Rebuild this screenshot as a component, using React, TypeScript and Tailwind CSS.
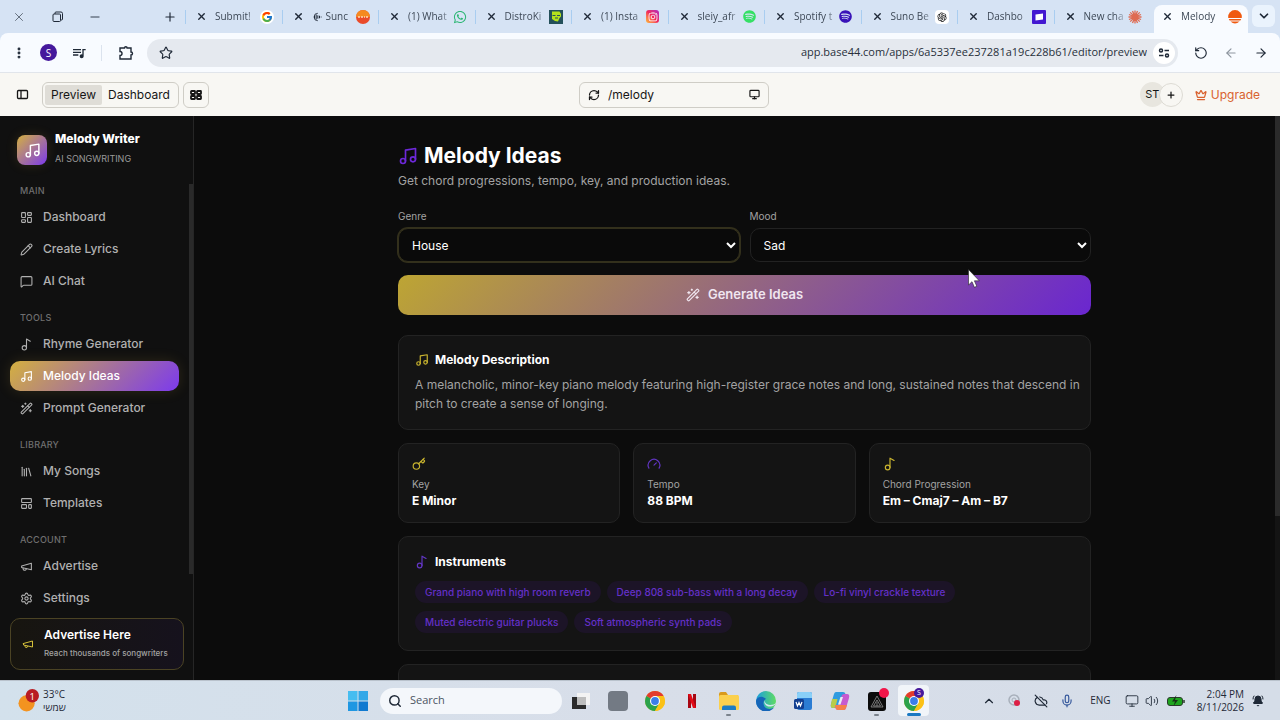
// <== IMPORTS ==>
import { JSX, ReactNode } from "react";
import {
  ArrowLeft,
  ArrowRight,
  BellRing,
  ChevronDown,
  ChevronUp,
  CloudOff,
  Crown,
  EllipsisVertical,
  Gauge,
  Key,
  LayoutDashboard,
  LayoutTemplate,
  Library,
  MessageSquare,
  Mic,
  Minus,
  Monitor,
  Music,
  Pencil,
  Plus,
  RefreshCw,
  RotateCcw,
  Search,
  Settings,
  Star,
  Volume2,
  WandSparkles,
  X,
} from "lucide-react";
import { FcGoogle } from "react-icons/fc";
import { FaInstagram, FaSpotify, FaWhatsapp } from "react-icons/fa6";
import { AiOutlineOpenAI } from "react-icons/ai";
import { MdQueueMusic } from "react-icons/md";

// <== TAB TYPE ==>
type Tab = { title: string; icon: ReactNode; audio?: boolean };

// <== NAV SECTION TYPE ==>
type NavSection = {
  heading: string;
  items: { label: string; icon: (props: { className?: string }) => ReactNode; active?: boolean }[];
};

// <== SINGLE NOTE ICON ==>
const NoteIcon = ({ className }: { className?: string }): JSX.Element => (
  <svg
    viewBox="0 0 24 24"
    fill="none"
    stroke="currentColor"
    strokeWidth="2"
    strokeLinecap="round"
    strokeLinejoin="round"
    className={className}
  >
    <circle cx="8" cy="18" r="4" />
    <path d="M12 18V2l7 4" />
  </svg>
);

// <== MEGAPHONE ICON ==>
const MegaphoneIcon = ({ className }: { className?: string }): JSX.Element => (
  <svg
    viewBox="0 0 24 24"
    fill="none"
    stroke="currentColor"
    strokeWidth="2"
    strokeLinecap="round"
    strokeLinejoin="round"
    className={className}
  >
    <path d="m3 11 18-5v12L3 14v-3z" />
    <path d="M11.6 16.8a3 3 0 1 1-5.8-1.6" />
  </svg>
);

// <== BROWSER TABS ==>
const tabs: Tab[] = [
  { title: "Submit!", icon: <FcGoogle className="w-3.5 h-3.5 rounded-full bg-white p-px" /> },
  {
    title: "Sunc",
    audio: true,
    icon: (
      <svg viewBox="0 0 14 14" className="w-3.5 h-3.5">
        <circle cx="7" cy="7" r="7" fill="#ea4b2a" />
        <path d="M0 7a7 7 0 0 1 14 0z" fill="#f58a1f" />
        <path d="M2 7h2M5 7h2M8 7h1M10 7h2" stroke="#ffd9b8" strokeWidth="1.5" />
      </svg>
    ),
  },
  { title: "(1) What", icon: <FaWhatsapp className="w-3.5 h-3.5 text-[#2bb673]" /> },
  {
    title: "DistroKi",
    icon: (
      <svg viewBox="0 0 14 14" className="w-3.5 h-3.5">
        <rect width="14" height="14" fill="#24505a" />
        <path d="M3 1.500h7.500q2 2 1.500 5l-1.500 1.500-1.500 3.500-3-.5L3 9z" fill="#b4e01c" />
        <path d="M3.500 5.500h3M8 5.500h3M6 8h3" stroke="#24505a" strokeWidth="1" />
      </svg>
    ),
  },
  {
    title: "(1) Insta",
    icon: (
      <span className="w-[13px] h-[13px] rounded-[3px] flex items-center justify-center bg-linear-to-tr from-[#fdb529] via-[#f0265c] to-[#b01fc0]">
        <FaInstagram className="w-2.5 h-2.5 text-white" />
      </span>
    ),
  },
  { title: "sleiy_afr", icon: <FaSpotify className="w-[13px] h-[13px] text-[#35e065]" /> },
  { title: "Spotify t", icon: <FaSpotify className="w-[13px] h-[13px] text-[#3913b8]" /> },
  {
    title: "Suno Be",
    icon: (
      <span className="w-[14px] h-[14px] rounded-sm bg-white flex items-center justify-center">
        <AiOutlineOpenAI className="w-3 h-3 text-[#222]" />
      </span>
    ),
  },
  {
    title: "Dashbo",
    icon: (
      <svg viewBox="0 0 14 14" className="w-3.5 h-3.5">
        <rect width="14" height="14" rx="1" fill="#4318d1" />
        <path d="M3.500 4.500 11 3.500v6L3.500 10.500z" fill="#fff" />
      </svg>
    ),
  },
  {
    title: "New cha",
    icon: (
      <svg viewBox="0 0 14 14" className="w-3.5 h-3.5" stroke="#df6b52" strokeWidth="1.3">
        <path d="M7 .5v13M.5 7h13M2.2 2.4l9.6 9.2M11.8 2.4 2.2 11.6M4.5 1l5 12M9.5 1l-5 12M1 4.5l12 5M13 4.5l-12 5" />
      </svg>
    ),
  },
];

// <== SIDEBAR SECTIONS ==>
const sections: NavSection[] = [
  {
    heading: "MAIN",
    items: [
      { label: "Dashboard", icon: (props) => <LayoutDashboard {...props} /> },
      { label: "Create Lyrics", icon: (props) => <Pencil {...props} /> },
      { label: "AI Chat", icon: (props) => <MessageSquare {...props} /> },
    ],
  },
  {
    heading: "TOOLS",
    items: [
      { label: "Rhyme Generator", icon: NoteIcon },
      { label: "Melody Ideas", icon: (props) => <Music {...props} />, active: true },
      { label: "Prompt Generator", icon: (props) => <WandSparkles {...props} /> },
    ],
  },
  {
    heading: "LIBRARY",
    items: [
      { label: "My Songs", icon: (props) => <Library {...props} /> },
      { label: "Templates", icon: (props) => <LayoutTemplate {...props} /> },
    ],
  },
  {
    heading: "ACCOUNT",
    items: [
      { label: "Advertise", icon: MegaphoneIcon },
      { label: "Settings", icon: (props) => <Settings {...props} /> },
    ],
  },
];

// <== INSTRUMENTS ==>
const instruments: string[] = [
  "Grand piano with high room reverb",
  "Deep 808 sub-bass with a long decay",
  "Lo-fi vinyl crackle texture",
  "Muted electric guitar plucks",
  "Soft atmospheric synth pads",
];

// <== TAB TITLE COMPONENT ==>
const TabTitle = ({ children }: { children: ReactNode }): JSX.Element => (
  <span className="flex-1 min-w-0 whitespace-nowrap text-[10px] text-[#3d4856] mask-r-from-70%">{children}</span>
);

// <== TAB STRIP COMPONENT ==>
const TabStrip = (): JSX.Element => {
  return (
    <div className="flex h-[33px] bg-[#d6e3f4] text-[#1f2937]">
      {/* WINDOW CONTROLS */}
      <div className="flex items-center w-[185px] shrink-0 pl-3">
        <button aria-label="Close" className="w-[38px] text-[#56606e]">
          <X className="w-3.5 h-3.5" strokeWidth={1.5} />
        </button>
        <button aria-label="Restore" className="w-[38px]">
          <svg viewBox="0 0 12 12" className="w-3 h-3 ml-0.5" fill="none" stroke="currentColor">
            <rect x="1" y="3" width="7.5" height="7.5" rx="1" />
            <path d="M3 3V2q0-1 1-1h5q1.500 0 1.500 1.500V8q0 1-1 1H9" />
          </svg>
        </button>
        <button aria-label="Minimize" className="flex-1">
          <Minus className="w-3.5 h-3.5" strokeWidth={1.5} />
        </button>
        <button aria-label="New tab" className="pr-2">
          <Plus className="w-3.5 h-3.5" strokeWidth={2} />
        </button>
      </div>
      {/* TABS */}
      <div className="flex flex-1 min-w-0 items-center">
        {tabs.map((tab) => (
          <div key={tab.title} className="flex flex-1 min-w-0 items-center border-l border-[#a9cdf0] h-3.5 pl-2.5 pr-2">
            <button aria-label={"Close " + tab.title} className="mr-2">
              <X className="w-[11px] h-[11px]" strokeWidth={3} />
            </button>
            {tab.audio && (
              <svg viewBox="0 0 12 12" className="w-2.5 h-2.5 mr-1 shrink-0" fill="none" stroke="currentColor">
                <path d="M7 1.500a4.500 4.500 0 1 0 0 9" />
                <path d="M3 4.500v3M5 3v6M7 4v4M9 4.500v3M11 5.500v1" strokeWidth="1.2" />
              </svg>
            )}
            <TabTitle>{tab.title}</TabTitle>
            <span className="flex w-3.5 shrink-0 items-center justify-center">{tab.icon}</span>
          </div>
        ))}
      </div>
      {/* ACTIVE TAB */}
      <div className="flex items-center w-[94px] shrink-0 mx-1 mt-[5px] pb-[5px] pl-2 pr-1.5 rounded-t-lg bg-[#f8fbff]">
        <button aria-label="Close Melody Writer" className="mr-2">
          <X className="w-[11px] h-[11px]" strokeWidth={3} />
        </button>
        <TabTitle>Melody</TabTitle>
        <svg viewBox="0 0 14 14" className="w-3.5 h-3.5 shrink-0">
          <path d="M.3 8a6.800 6.800 0 1 1 13.400 0z" fill="#f0590f" />
          <path d="M.8 9h12.400l-.8 1.600H1.600zM2.500 11.500h9q-4.500 4-9 0z" fill="#f0590f" />
        </svg>
      </div>
      <button
        aria-label="Search tabs"
        className="flex items-center justify-center w-[23px] h-[22px] mt-[5px] mr-[5px] rounded-md bg-[#eaf3fd]"
      >
        <ChevronDown className="w-3.5 h-3.5" strokeWidth={3} />
      </button>
    </div>
  );
};

// <== ADDRESS BAR COMPONENT ==>
const AddressBar = (): JSX.Element => {
  return (
    <div className="bg-[#d6e3f4]">
      <div className="flex items-center h-10 px-3 rounded-t-lg bg-[#f8fbff] border-b border-[#e1e5eb] text-[#1f2937]">
        <button aria-label="Menu" className="w-7">
          <EllipsisVertical className="w-3.5 h-3.5" strokeWidth={3} />
        </button>
        <button className="w-[17px] h-[17px] rounded-full bg-[#45199c] text-white text-[10px] leading-none">
          S
        </button>
        <button aria-label="Media" className="ml-3.5 pr-3.5 border-r border-[#dbe3ee]">
          <MdQueueMusic className="w-4 h-4" />
        </button>
        <button aria-label="Extensions" className="ml-4 mr-[13px]">
          <svg viewBox="0 0 16 16" className="w-4 h-4" fill="none" stroke="currentColor" strokeWidth="1.4">
            <path d="M2 3h4.500a1.300 1.300 0 0 1 2.600 0H13v4a1.500 1.500 0 0 1 0 3v4H2v-3.500a2 2 0 0 0 0-4z" />
          </svg>
        </button>
        {/* URL */}
        <div className="flex flex-1 items-center h-7 rounded-full bg-[#e5e9ef] pl-3 pr-[3px]">
          <Star className="w-3.5 h-3.5" strokeWidth={2} />
          <input
            aria-label="Address"
            readOnly
            defaultValue="app.base44.com/apps/6a5337ee237281a19c228b61/editor/preview"
            className="flex-1 min-w-0 bg-transparent text-right text-[11px] text-[#28303b] outline-none pr-1.5"
          />
          <button aria-label="Site settings" className="flex items-center justify-center w-[22px] h-[22px] rounded-full bg-white">
            <svg viewBox="0 0 12 12" className="w-3 h-3" fill="none" stroke="currentColor" strokeWidth="1.5">
              <circle cx="3" cy="3.500" r="1.500" />
              <path d="M6.500 3.500H11M1 8.500h4.500" />
              <circle cx="9" cy="8.500" r="1.500" />
            </svg>
          </button>
        </div>
        <button aria-label="Reload" className="ml-4">
          <RotateCcw className="w-3.5 h-3.5" strokeWidth={2} />
        </button>
        <button aria-label="Back" className="ml-4 text-[#8e959f]">
          <ArrowLeft className="w-3.5 h-3.5" strokeWidth={2} />
        </button>
        <button aria-label="Forward" className="ml-4">
          <ArrowRight className="w-3.5 h-3.5" strokeWidth={2} />
        </button>
      </div>
    </div>
  );
};

// <== EDITOR BAR COMPONENT ==>
const EditorBar = (): JSX.Element => {
  return (
    <div className="flex items-center h-[43px] bg-[#f8f7f3] pl-4 pr-5 text-xs text-[#161616]">
      {/* LEFT SECTION */}
      <div className="flex flex-1 items-center">
        <button aria-label="Toggle sidebar" className="mr-[13px]">
          <svg viewBox="0 0 13 13" className="w-[13px] h-[13px]" fill="none" stroke="currentColor" strokeWidth="1.3">
            <rect x="1.500" y="2.500" width="10" height="8" rx="1" />
            <path d="M5 2.500v8" />
          </svg>
        </button>
        <div className="flex items-center h-[26px] rounded-md border border-[#cfcdc6] px-0.5">
          <button className="h-5 rounded-xs bg-[#dfddd7] px-1.5">Preview</button>
          <button className="h-5 px-1.5">Dashboard</button>
        </div>
        <button
          aria-label="Apps"
          className="flex items-center justify-center w-[26px] h-[26px] ml-1 rounded-md border border-[#cfcdc6]"
        >
          <svg viewBox="0 0 12 12" className="w-3 h-3" fill="none" stroke="currentColor" strokeWidth="1.8">
            <rect x="1" y="2" width="4" height="3" rx=".5" />
            <rect x="7" y="2" width="4" height="3" rx=".5" />
            <rect x="1" y="7" width="4" height="3" rx=".5" />
            <rect x="7" y="7" width="4" height="3" rx=".5" />
          </svg>
        </button>
      </div>
      {/* PAGE PATH */}
      <div className="flex items-center w-[190px] h-[26px] ml-[72px] rounded-md border border-[#cfcdc6] px-2">
        <RefreshCw className="w-3 h-3" strokeWidth={2.5} />
        <input
          aria-label="Page path"
          defaultValue="/melody"
          className="flex-1 min-w-0 bg-transparent pl-2 outline-none"
        />
        <Monitor className="w-[11px] h-[11px]" strokeWidth={2.5} />
      </div>
      {/* RIGHT SECTION */}
      <div className="flex flex-1 items-center justify-end">
        <span className="flex items-center justify-center w-[25px] h-[25px] rounded-full bg-[#e8e6df] text-[11px]">
          ST
        </span>
        <button
          aria-label="Invite"
          className="flex items-center justify-center w-6 h-6 -ml-1.5 rounded-full border border-[#dddbd4] bg-[#f8f7f3]"
        >
          <Plus className="w-2.5 h-2.5" strokeWidth={3} />
        </button>
        <a href="#upgrade" className="flex items-center gap-1 ml-3 text-[#d9622f]">
          <Crown className="w-3 h-3" strokeWidth={2.5} />
          Upgrade
        </a>
      </div>
    </div>
  );
};

// <== SIDEBAR COMPONENT ==>
const Sidebar = (): JSX.Element => {
  return (
    <aside className="relative flex flex-col w-[194px] shrink-0 bg-[#101010] border-r border-[#262626]">
      {/* BRAND */}
      <div className="flex items-center gap-2 pl-[17px] pt-3.5">
        <span className="flex items-center justify-center w-[30px] h-[30px] rounded-lg bg-[linear-gradient(135deg,#d4b03f,#7c3aed)] shadow-[0_0_12px_rgba(212,176,63,0.15)]">
          <Music className="w-[17px] h-[17px] text-white" />
        </span>
        <div>
          <p className="text-xs leading-[18px] font-extrabold text-white">Melody Writer</p>
          <p className="text-[9px] leading-[22px] text-[#9a9a9a]">AI SONGWRITING</p>
        </div>
      </div>
      {/* NAVIGATION */}
      <nav className="flex flex-col flex-1 min-h-0 gap-[11px] overflow-hidden mt-2.5 pl-2.5 pr-3.5">
        {sections.map((section) => (
          <div key={section.heading}>
            <p className="pl-2.5 text-[9px] leading-[22px] font-medium tracking-wide text-[#6f6f6f]">
              {section.heading}
            </p>
            <div className="flex flex-col gap-0.5">
              {section.items.map(({ label, icon: Icon, active }) => (
                <a
                  key={label}
                  href="#nav"
                  className={
                    active
                      ? "flex items-center gap-2.5 h-[30px] pl-2.5 rounded-[10px] text-xs font-medium text-white bg-[linear-gradient(135deg,#d4b03f,#7c3aed)] shadow-[0_0_14px_rgba(212,176,63,0.15)]"
                      : "flex items-center gap-2.5 h-[30px] pl-2.5 text-xs font-medium text-[#b0b0b0]"
                  }
                >
                  <Icon className="w-[13px] h-[13px]" />
                  {label}
                </a>
              ))}
            </div>
          </div>
        ))}
      </nav>
      {/* SCROLLBAR THUMB */}
      <div className="absolute right-0 top-[68px] bottom-[106px] w-1 bg-[#2a2a2a]" />
      {/* ADVERTISE CARD */}
      <a
        href="#advertise"
        className="flex items-center gap-2.5 h-[52px] ml-2.5 mb-2.5 mr-[9px] pl-[11px] rounded-[10px] border border-[#4b4324] bg-linear-to-r from-[#17150f] to-[#16121d]"
      >
        <MegaphoneIcon className="w-3 h-3 shrink-0 text-[#d4c03a]" />
        <span className="whitespace-nowrap">
          <span className="block text-xs leading-[18px] font-semibold text-white">Advertise Here</span>
          <span className="block text-[8px] leading-[18px] font-medium text-[#a3a3a3]">
            Reach thousands of songwriters
          </span>
        </span>
      </a>
    </aside>
  );
};

// <== SELECT FIELD COMPONENT ==>
const SelectField = ({
  id,
  label,
  value,
  focused,
}: {
  id: string;
  label: string;
  value: string;
  focused?: boolean;
}): JSX.Element => (
  <div className="flex-1">
    <label htmlFor={id} className="block text-[10px] leading-4 mb-1 text-[#a3a3a3]">
      {label}
    </label>
    <select
      id={id}
      defaultValue={value}
      className={
        focused
          ? "w-full h-[34px] rounded-[10px] border border-[#33301c] bg-[#0a0a0a] px-[9px] text-xs text-white scheme-dark outline-none ring-1 ring-[#33301c]"
          : "w-full h-[34px] rounded-[10px] border border-[#222222] bg-[#0a0a0a] px-[9px] text-xs text-white scheme-dark outline-none"
      }
    >
      <option>{value}</option>
    </select>
  </div>
);

// <== STAT CARD COMPONENT ==>
const StatCard = ({ icon, label, value }: { icon: ReactNode; label: string; value: string }): JSX.Element => (
  <div className="h-20 rounded-[10px] border border-[#232323] bg-[#141414] px-[13px] pt-[13px]">
    {icon}
    <p className="mt-[5px] text-[10px] leading-4 text-[#a3a3a3]">{label}</p>
    <p className="text-xs leading-[18px] font-bold text-white">{value}</p>
  </div>
);

// <== MELODY PAGE COMPONENT ==>
const MelodyPage = (): JSX.Element => {
  return (
    <main className="relative flex-1 min-w-0 overflow-hidden bg-[#0c0c0c] pl-5 pr-[5px]">
      <div className="max-w-[693px] mx-auto pt-[26px]">
        {/* HEADING */}
        <h1 className="flex items-center gap-1.5 text-[21px] leading-7 font-bold text-white">
          <Music className="w-5 h-5 text-[#6d28d9]" />
          Melody Ideas
        </h1>
        <p className="text-xs leading-[22px] text-[#a3a3a3]">
          Get chord progressions, tempo, key, and production ideas.
        </p>
        {/* FORM */}
        <div className="flex gap-2.5 mt-4">
          <SelectField id="genre" label="Genre" value="House" focused />
          <SelectField id="mood" label="Mood" value="Sad" />
        </div>
        <button className="flex items-center justify-center gap-2 w-full h-10 mt-[13px] rounded-[10px] bg-[linear-gradient(135deg,#bda533,#6a26d0)] text-[13px] font-semibold text-[#f0e6f0]">
          <WandSparkles className="w-3.5 h-3.5" />
          Generate Ideas
        </button>
        {/* DESCRIPTION */}
        <section className="h-[95px] mt-5 rounded-[10px] border border-[#232323] bg-[#141414] pl-4 pr-1 pt-3.5">
          <h2 className="flex items-center gap-1.5 text-xs leading-5 font-bold text-white">
            <Music className="w-3.5 h-3.5 text-[#c9b42f]" />
            Melody Description
          </h2>
          <p className="mt-[5px] text-xs leading-[19px] text-[#a3a3a3]">
            A melancholic, minor-key piano melody featuring high-register grace notes and long, sustained notes that
            descend in pitch to create a sense of longing.
          </p>
        </section>
        {/* STATS */}
        <div className="grid grid-cols-3 gap-[13px] mt-[13px]">
          <StatCard icon={<Key className="w-3.5 h-3.5 text-[#c9b42f]" />} label="Key" value="E Minor" />
          <StatCard icon={<Gauge className="w-3.5 h-3.5 text-[#6236c4]" />} label="Tempo" value="88 BPM" />
          <StatCard
            icon={<NoteIcon className="w-3.5 h-3.5 text-[#c9b42f]" />}
            label="Chord Progression"
            value="Em – Cmaj7 – Am – B7"
          />
        </div>
        {/* INSTRUMENTS */}
        <section className="h-[115px] mt-[13px] rounded-[10px] border border-[#232323] bg-[#141414] px-4 pt-[15px]">
          <h2 className="flex items-center gap-1.5 text-xs leading-5 font-bold text-white">
            <NoteIcon className="w-3.5 h-3.5 text-[#6236c4]" />
            Instruments
          </h2>
          <div className="flex flex-wrap gap-x-1.5 gap-y-2 mt-[9px]">
            {instruments.map((name) => (
              <span
                key={name}
                className="rounded-full bg-[#1c1427] px-2.5 text-[10px] leading-[22px] font-medium text-[#6430c8]"
              >
                {name}
              </span>
            ))}
          </div>
        </section>
        {/* NEXT CARD */}
        <section className="h-24 mt-[13px] rounded-[10px] border border-[#232323] bg-[#141414]" />
      </div>
      {/* SCROLLBAR */}
      <div className="absolute right-0 top-0 bottom-0 w-[5px] bg-[#141414]">
        <div className="h-[400px] bg-[#2b2b2b]" />
      </div>
    </main>
  );
};

// <== CHROME LOGO COMPONENT ==>
const ChromeLogo = (): JSX.Element => (
  <svg viewBox="0 0 20 20" className="w-5 h-5">
    <circle cx="10" cy="10" r="10" fill="#fbc116" />
    <path d="M10 10 1.340 5A10 10 0 0 1 18.660 5z" fill="#e33b2e" />
    <path d="M10 10 1.340 5A10 10 0 0 0 10 20l4.300-7.500z" fill="#2ba24c" />
    <path d="M10 5h8.660A10 10 0 0 1 10 20l4.300-7.500z" fill="#fbc116" />
    <circle cx="10" cy="10" r="5" fill="#fff" />
    <circle cx="10" cy="10" r="3.900" fill="#3b7de8" />
  </svg>
);

// <== TASKBAR APPS ==>
const taskbarApps: { name: string; icon: ReactNode; open?: boolean; active?: boolean }[] = [
  {
    name: "Task view",
    icon: (
      <svg viewBox="0 0 20 20" className="w-5 h-5">
        <rect x="6" y="2" width="13" height="12" fill="#f3f3f3" />
        <rect x="1" y="6" width="14" height="12" fill="#2b2b2b" />
        <rect x="6" y="6" width="9" height="8" fill="#bdbdbd" />
      </svg>
    ),
  },
  { name: "Notes", icon: <span className="w-5 h-5 rounded-sm bg-[#737a84]" /> },
  { name: "Chrome", icon: <ChromeLogo /> },
  {
    name: "Netflix",
    icon: (
      <svg viewBox="0 0 20 20" className="w-5 h-5">
        <path d="M6 3h3v14H6zM11 3h3v14h-3z" fill="#a80612" />
        <path d="M6 3h3l5 14h-3z" fill="#e30b17" />
      </svg>
    ),
  },
  {
    name: "Files",
    open: true,
    icon: (
      <svg viewBox="0 0 22 20" className="w-[22px] h-5">
        <path d="M1 3q0-2 2-2h5l2 3h10v6H1z" fill="#d99a1c" />
        <rect x="1" y="4" width="20" height="15" rx="1.500" fill="#fbd04e" />
        <path d="M4 19v-2.500q0-2 2-2h10q2 0 2 2V19z" fill="#1c7cc4" />
      </svg>
    ),
  },
  {
    name: "Edge",
    icon: (
      <svg viewBox="0 0 20 20" className="w-5 h-5">
        <defs>
          <linearGradient id="edge" x1="0" y1="0" x2="1" y2="0">
            <stop offset="0" stopColor="#1b9de0" />
            <stop offset="1" stopColor="#5fdc63" />
          </linearGradient>
        </defs>
        <circle cx="10" cy="10" r="10" fill="url(#edge)" />
        <path d="M.2 9C2 5 8 5 10 8c-4 2-3 8 1 9.500 3 1 6 0 7.500-1.500A10 10 0 0 1 .2 9z" fill="#1565b8" />
        <path d="M10 8c-3 2 0 6 4 6 3 0 5-.8 6-2-.5 3-6 4.500-9 3-3-2-3.500-5-1-7z" fill="#d8e6f2" />
      </svg>
    ),
  },
  {
    name: "Word",
    icon: (
      <svg viewBox="0 0 20 20" className="w-5 h-5">
        <rect x="4" y="1" width="15" height="18" rx="2" fill="#2b7cd3" />
        <path d="M4 7V3q0-2 2-2h11q2 0 2 2v4z" fill="#8ad0f8" />
        <rect x="1" y="8" width="10" height="10" rx="1.500" fill="#123f91" />
        <path d="m3 11 1.500 4L6 11.500 7.500 15 9 11" fill="none" stroke="#fff" strokeWidth="1.200" />
      </svg>
    ),
  },
  {
    name: "Copilot",
    icon: (
      <svg viewBox="0 0 20 20" className="w-5 h-5">
        <path d="M6 1h7q2 0 2.500 2l.7 3H12L9 15q-.7 2-3 2H3q-3 0-2-4l3-10q.6-2 2-2z" fill="#2f9be0" />
        <path d="M2 8h5.500L5.500 16q-.5 1-2 1H3q-3 0-2-4z" fill="#b8cc4a" />
        <path d="M14 19H8q-2 0-2.500-2L5 14h4l2.500-9q.6-2 3-2H17q3 0 2 4l-3 10q-.6 2-2 2z" fill="#c65bd0" />
        <path d="M14 19H8q-2 0-2.500-2L5 14h12l-1 3q-.6 2-2 2z" fill="#f5804b" />
        <path d="M8 13.500 10.500 6H13l-2.500 7.500z" fill="#e8eef5" />
      </svg>
    ),
  },
  {
    name: "Studio",
    open: true,
    icon: (
      <svg viewBox="0 0 24 24" className="w-6 h-6 overflow-visible">
        <rect x="3" y="3" width="18" height="19" rx="3" fill="#0b0b0b" />
        <path d="m12 7-6 11h12zM12 11l-3.500 6h7zM12 13v4" fill="none" stroke="#8f8f8f" strokeWidth=".8" />
        <circle cx="19" cy="4" r="5" fill="#f2164a" />
      </svg>
    ),
  },
  { name: "Chrome profile", icon: <ChromeLogo />, open: true, active: true },
];

// <== TASKBAR COMPONENT ==>
const Taskbar = (): JSX.Element => {
  return (
    <footer className="flex items-center h-10 shrink-0 border-t border-[#b9c2cc] bg-linear-to-r from-[#d3e1ec] via-[#d8dee9] to-[#d5dde8] text-[#1f2937]">
      {/* WEATHER */}
      <div className="flex flex-1 items-center gap-1 pl-[18px]">
        <svg viewBox="0 0 22 24" className="w-[21px] h-[23px]">
          <circle cx="9" cy="15" r="8.500" fill="#f39320" />
          <circle cx="15" cy="7" r="7" fill="#b81c22" />
          <text x="15" y="11" textAnchor="middle" fontSize="10" fill="#fff">
            1
          </text>
        </svg>
        <div className="text-[10px] leading-[13px]">
          <p>33°C</p>
          <p>שמשי</p>
        </div>
      </div>
      {/* APPS */}
      <div className="flex items-center h-full pr-2">
        <button aria-label="Start" className="flex items-center justify-center w-8 mr-1.5">
          <svg viewBox="0 0 20 20" className="w-5 h-5">
            <path d="M0 0h9.500v9.500H0z" fill="#46bdf0" />
            <path d="M10.500 0H20v9.500h-9.500z" fill="#32a8e8" />
            <path d="M0 10.500h9.500V20H0z" fill="#1f97e2" />
            <path d="M10.500 10.500H20V20h-9.500z" fill="#1079d0" />
          </svg>
        </button>
        <label className="flex items-center w-[182px] h-[26px] rounded-full bg-[#f4f7fb] pl-2">
          <Search className="w-3.5 h-3.5" strokeWidth={2.5} />
          <input
            aria-label="Search"
            placeholder="Search"
            className="flex-1 min-w-0 pl-2 bg-transparent text-[11px] outline-none placeholder:text-[#4b5563]"
          />
        </label>
        {taskbarApps.map((app) => (
          <button
            key={app.name}
            aria-label={app.name}
            className="relative flex items-center justify-center w-[37px] h-full"
          >
            {app.active && <span className="absolute inset-x-[3px] inset-y-1 rounded-sm bg-[#f1f5f9]" />}
            <span className="relative flex">{app.icon}</span>
            {app.active && (
              <span className="absolute top-[7px] right-2 w-2.5 h-2.5 rounded-full bg-[#45199c] text-white text-[7px] leading-[10px]">
                S
              </span>
            )}
            {app.open && (
              <span
                className={
                  app.active
                    ? "absolute bottom-1 w-3.5 h-[3px] rounded-full bg-[#1978c2]"
                    : "absolute bottom-1 w-[5px] h-0.5 rounded-full bg-[#7b838d]"
                }
              />
            )}
          </button>
        ))}
      </div>
      {/* TRAY */}
      <div className="flex flex-1 items-center justify-end pr-4">
        <ChevronUp className="w-3.5 h-3.5 mr-3" />
        <svg viewBox="0 0 14 14" className="w-3.5 h-3.5 mr-3">
          <circle cx="6" cy="6" r="5" fill="none" stroke="#a8b0bb" strokeWidth="1.500" />
          <circle cx="6" cy="6" r="2" fill="none" stroke="#a8b0bb" />
          <circle cx="9" cy="9" r="3" fill="#dc1f45" />
        </svg>
        <CloudOff className="w-3.5 h-3.5 mr-3" />
        <Mic className="w-3.5 h-3.5 mr-4 text-[#33569b]" />
        <span className="text-[10px] mr-3.5">ENG</span>
        <Monitor className="w-3.5 h-3.5 mr-1.5" strokeWidth={1.5} />
        <Volume2 className="w-3.5 h-3.5 mr-2" strokeWidth={1.5} />
        <svg viewBox="0 0 18 12" className="w-[18px] h-3 mr-3">
          <rect x=".5" y="2.500" width="15" height="8" rx="2.500" fill="#1fa51f" stroke="#2b3a2b" />
          <path d="M17 5v3" stroke="#2b3a2b" strokeWidth="1.500" />
          <path d="M9.500 0 5 6.500h3L6.500 11 11 5H8z" fill="#173017" />
        </svg>
        <div className="text-[10px] leading-[13px] text-right">
          <p>2:04 PM</p>
          <p>8/11/2026</p>
        </div>
        <BellRing className="w-3 h-3 ml-2" fill="currentColor" />
      </div>
    </footer>
  );
};

// <== APP COMPONENT ==>
const App = (): JSX.Element => {
  // RETURN APP COMPONENT
  return (
    <div className="relative flex flex-col h-screen overflow-hidden bg-black font-['Open_Sans','Noto_Sans',sans-serif]">
      <TabStrip />
      <AddressBar />
      <div className="flex flex-col flex-1 min-h-0 font-['Inter',sans-serif]">
        <EditorBar />
        <div className="flex flex-1 min-h-0">
          <Sidebar />
          <MelodyPage />
        </div>
      </div>
      <Taskbar />
      {/* MOUSE POINTER */}
      <svg viewBox="0 0 12 19" className="absolute left-[968px] top-[269px] w-3 h-[19px]">
        <path d="M.5.500v15.500l3.500-3.300 2.400 5.600 2.400-1-2.400-5.500h4.900z" fill="#fff" stroke="#222" strokeWidth=".6" />
      </svg>
    </div>
  );
};

// <== EXPORT APP COMPONENT ==>
export default App;
